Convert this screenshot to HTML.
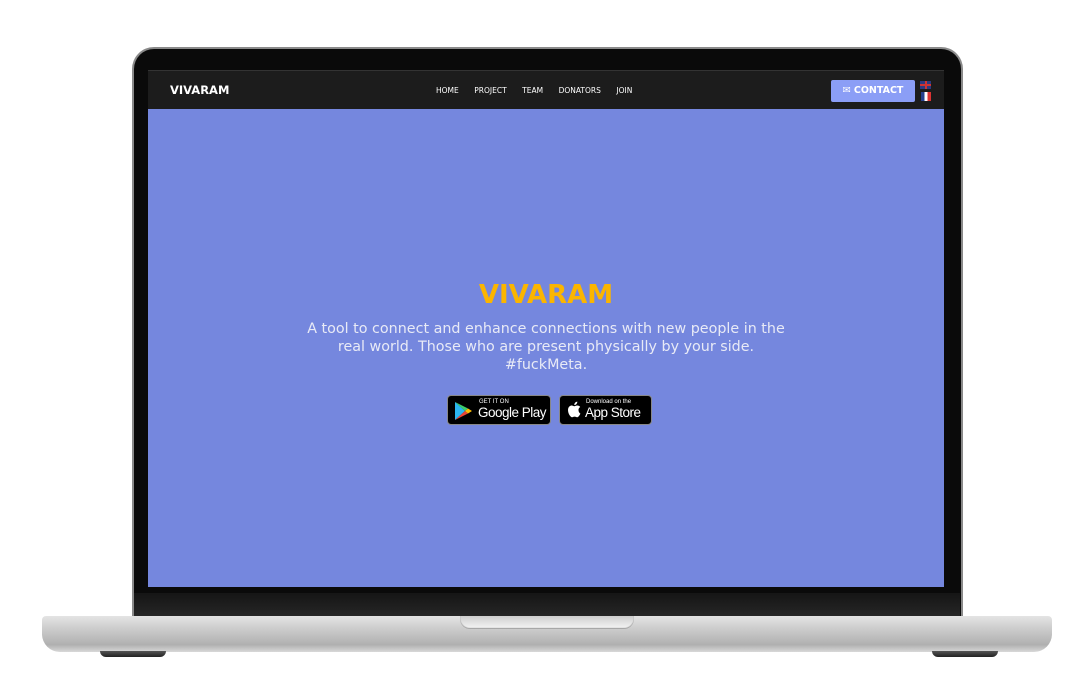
<!DOCTYPE html>
<html><head><meta charset="utf-8"><style>
*{margin:0;padding:0;box-sizing:border-box}
body{width:1066px;height:684px;background:#fff;position:relative;overflow:hidden;font-family:"DejaVu Sans","Liberation Sans",sans-serif}
.lid{position:absolute;left:132px;top:47px;width:831px;height:570px;background:#0a0a0a;border-radius:22px 22px 0 0;border:2px solid #8a8a8a;border-bottom:none}
.screen{position:absolute;left:148px;top:70px;width:796px;height:517px;background:#7587de}
.nav{position:absolute;left:0;top:0;width:796px;height:39px;background:#1c1c1c;border-top:1px solid #333}
.chin{position:absolute;left:134px;top:593px;width:826px;height:23px;background:linear-gradient(#151515,#262626)}
.base{position:absolute;left:42px;top:616px;width:1010px;height:36px;border-radius:4px 4px 18px 18px;background:linear-gradient(#e4e4e4,#c9c9c9 40%,#b0b0b0 80%,#d8d8d8)}
.notch{position:absolute;left:460px;top:616px;width:174px;height:13px;border-radius:0 0 10px 10px;background:linear-gradient(#cfcfcf,#f6f6f6);box-shadow:inset 0 -1px 1px #999}
.foot{position:absolute;top:651px;width:66px;height:6px;border-radius:0 0 6px 6px;background:linear-gradient(#555,#222)}
.logo{position:absolute;left:22px;top:12px;color:#fff;font-weight:bold;font-size:11.5px}
.links{position:absolute;left:288px;top:15px;font-size:7.5px;color:#fff;white-space:nowrap}
.links span{margin-right:15.5px}
.btn{position:absolute;left:683px;top:9px;width:84px;height:22px;background:#8b9ef6;border-radius:2px;color:#fff;font-weight:bold;font-size:9.5px;line-height:22px;text-align:center}
h1{position:absolute;left:0;width:796px;top:210px;text-align:center;color:#fbb500;font-size:26px;font-weight:bold}
p{position:absolute;left:150px;width:496px;top:250px;text-align:center;color:#e8eaf6;font-size:14.3px;line-height:18px}
.store{position:absolute;top:325px;height:30px;background:#000;border:1px solid #888;border-radius:4px;color:#fff;font-family:"Liberation Sans",sans-serif;white-space:nowrap}
.store .s{position:absolute;font-size:6px;top:3px}
.store .b{position:absolute;font-size:13.5px;top:9px;letter-spacing:-0.5px}
</style></head><body>
<div class="lid"></div>
<div class="chin"></div>
<div class="screen">
 <div class="nav">
  <div class="logo">VIVARAM</div>
  <div class="links"><span>HOME</span><span>PROJECT</span><span>TEAM</span><span>DONATORS</span><span>JOIN</span></div>
  <div class="btn">✉ CONTACT</div>
  <div style="position:absolute;left:772px;top:10px;width:11px;height:8px;background:#2a3a80"><div style="position:absolute;left:0;top:3px;width:11px;height:2px;background:#c33"></div><div style="position:absolute;left:4.5px;top:0;width:2px;height:8px;background:#c33"></div></div>
  <div style="position:absolute;left:773px;top:21px;width:10px;height:9px;background:linear-gradient(90deg,#24408e 33%,#fff 33% 66%,#d33 66%)"></div>
 </div>
 <h1>VIVARAM</h1>
 <p>A tool to connect and enhance connections with new people in the real world. Those who are present physically by your side. #fuckMeta.</p>
 <div class="store" style="left:299px;width:104px">
  <svg style="position:absolute;left:6px;top:5px" width="18" height="20" viewBox="0 0 18 20"><path d="M1 1L11 10L1 19Z" fill="#2bb5f0"/><path d="M1 1L14 7.5L11 10Z" fill="#3ccd6b"/><path d="M1 19L14 12.5L11 10Z" fill="#ea4335"/><path d="M14 7.5L18 10L14 12.5L11 10Z" fill="#fbbc04"/></svg>
  <span class="s" style="left:31px">GET IT ON</span><span class="b" style="left:30px">Google Play</span>
 </div>
 <div class="store" style="left:411px;width:93px">
  <svg style="position:absolute;left:7px;top:5px" width="14" height="17" viewBox="0 0 14 17"><path d="M11.5 9c0-2 1.6-2.9 1.7-3-1-1.4-2.4-1.5-2.9-1.5-1.2-.1-2.4.7-3 .7s-1.6-.7-2.6-.7C3.300 4.500 1 5.800 1 9c0 1.900.700 3.900 1.600 5.200.8 1.100 1.500 2 2.500 2s1.300-.6 2.500-.6 1.500.6 2.500.6 1.700-1 2.400-2c.5-.7.800-1.400.900-1.600C13.300 12.500 11.500 11.700 11.500 9zM9.500 3c.5-.6.900-1.500.8-2.400-.8 0-1.700.5-2.200 1.100-.5.500-.9 1.400-.8 2.300.9.100 1.700-.4 2.200-1z" fill="#fff"/></svg>
  <span class="s" style="left:26px">Download on the</span><span class="b" style="left:25px">App Store</span>
 </div>
</div>
<div class="base"></div>
<div class="notch"></div>
<div class="foot" style="left:100px"></div>
<div class="foot" style="left:932px"></div>
</body></html>
